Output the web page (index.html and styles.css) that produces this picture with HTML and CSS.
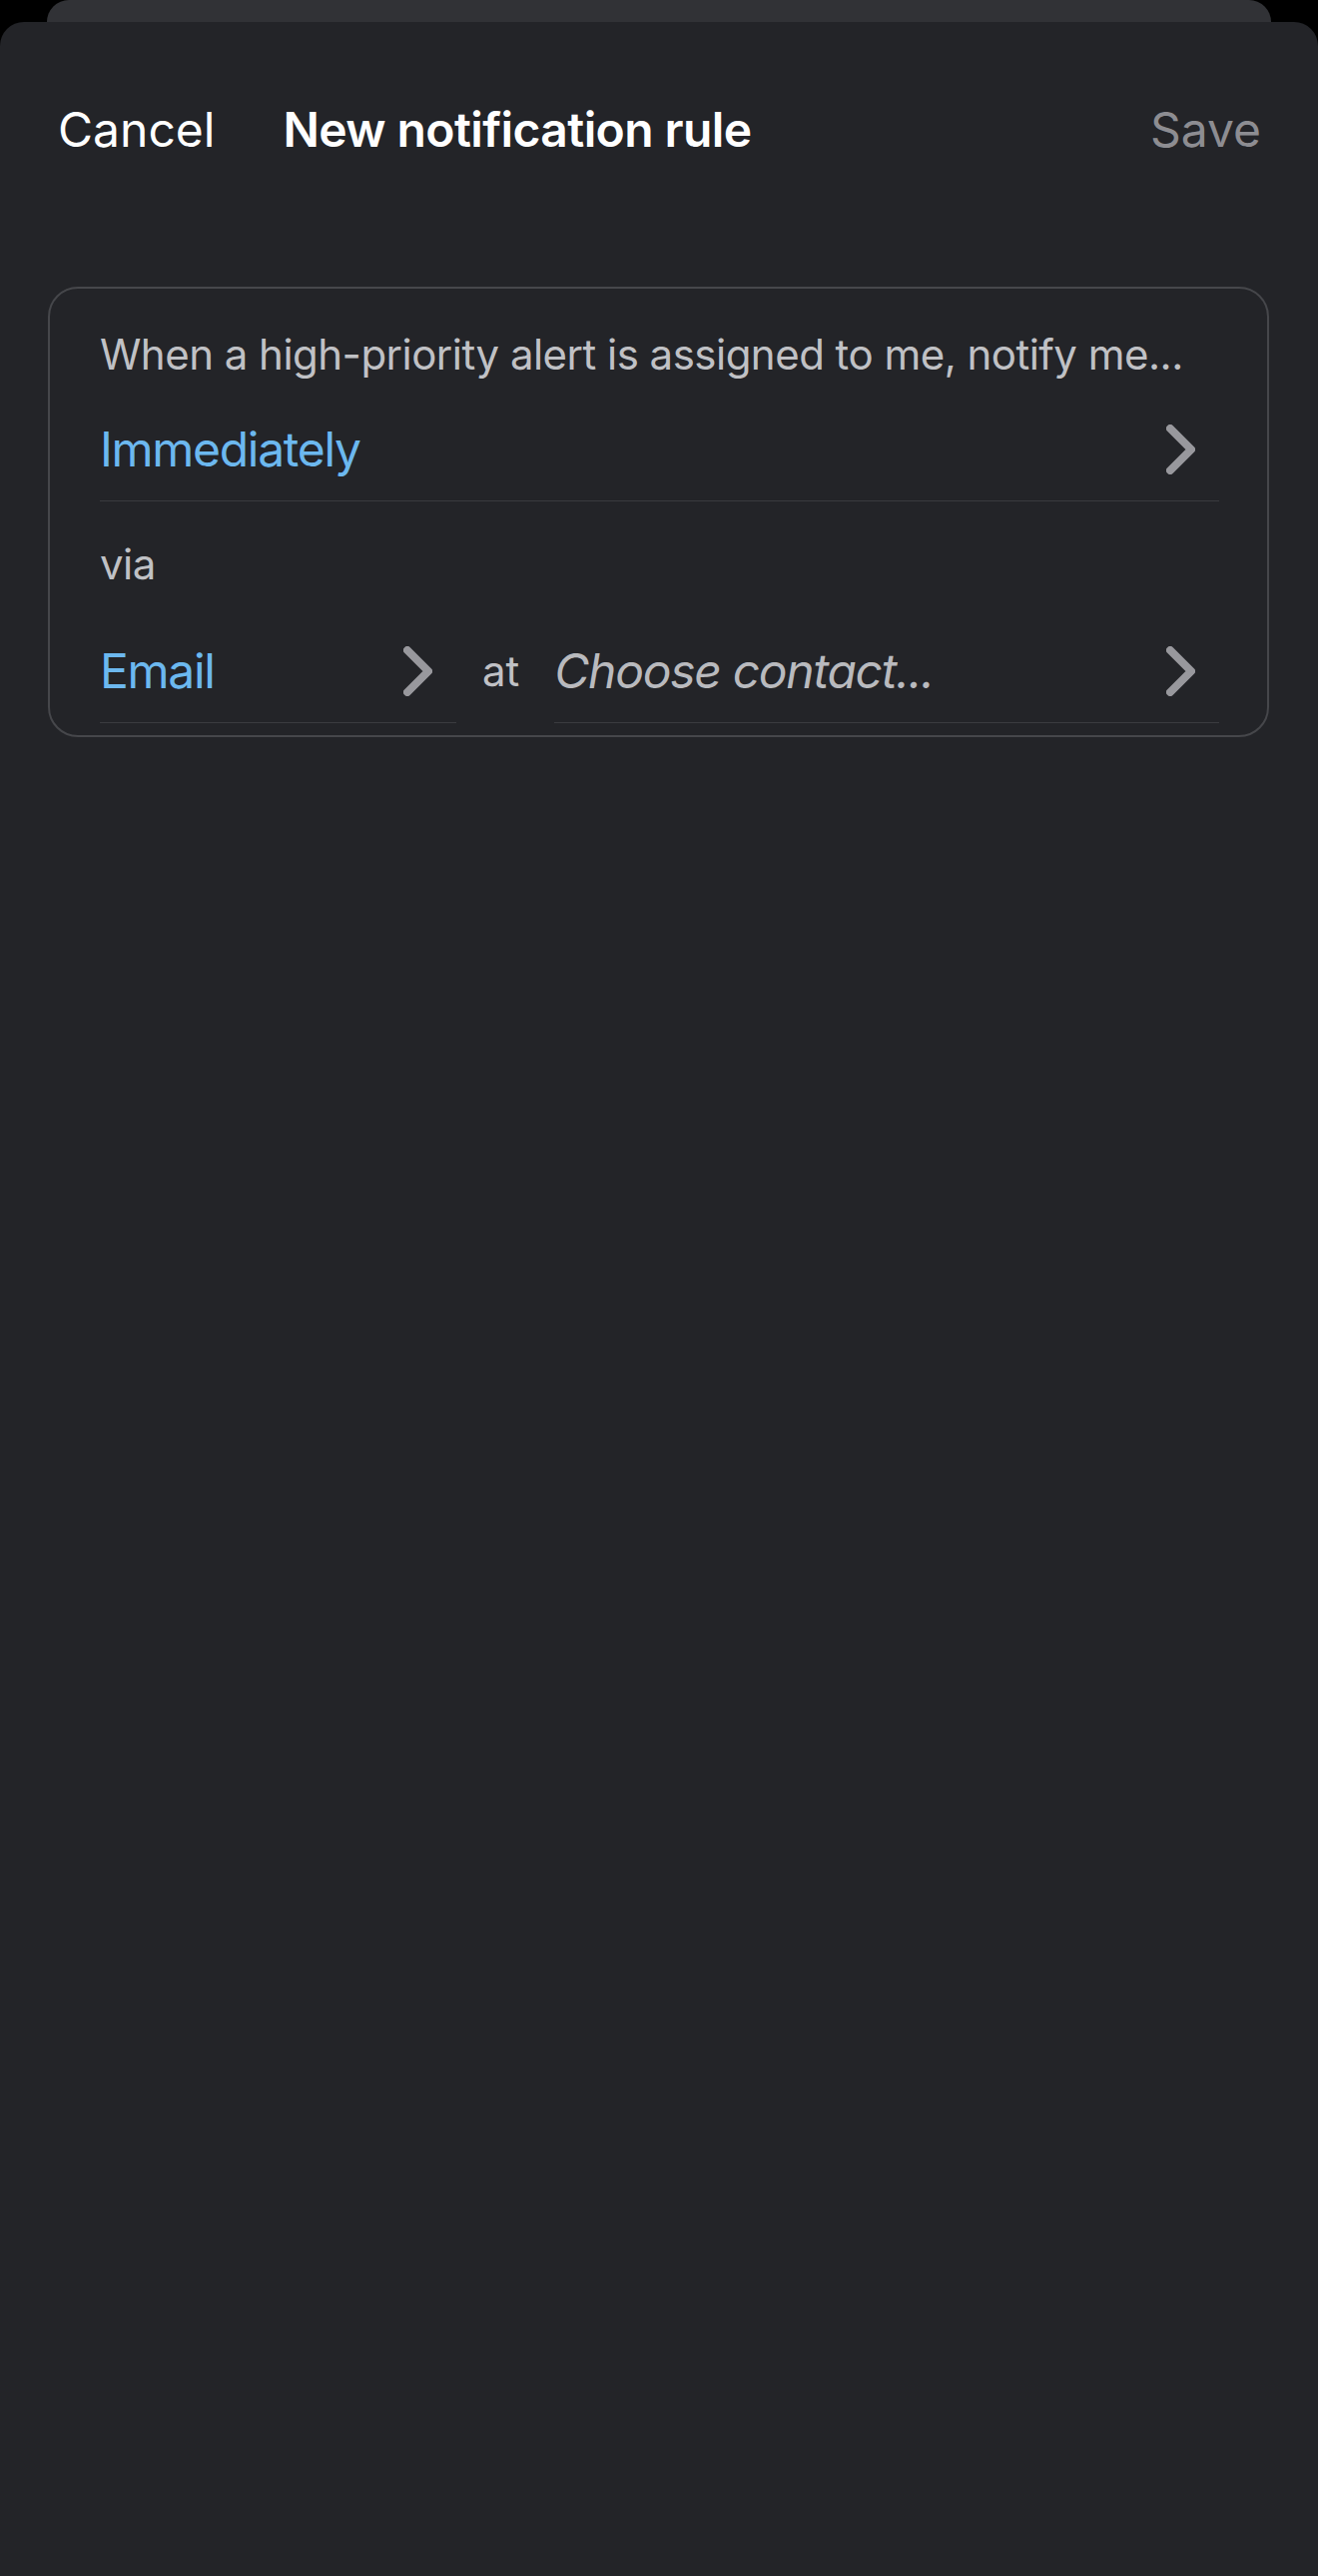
FILE: index.html
```html
<!DOCTYPE html>
<html lang="en">
<head>
<meta charset="utf-8">
<title>New notification rule</title>
<link rel="stylesheet" href="styles.css">
</head>
<body>
<div class="peek"></div>
<main class="sheet">
  <header class="nav">
    <span class="nav-cancel">Cancel</span>
    <span class="nav-title">New notification rule</span>
    <span class="nav-save">Save</span>
  </header>

  <section class="rule-card">
    <p class="rule-lead">When a high-priority alert is assigned to me, notify me...</p>
    <div class="rule-row rule-row-full">
      <span class="rule-value">Immediately</span>
      <svg class="chev" width="29" height="50" viewBox="0 0 29 50"><path d="M4 4 L25 25 L4 46"/></svg>
    </div>
    <p class="rule-lead rule-via">via</p>
    <div class="rule-split">
      <div class="rule-row rule-row-method">
        <span class="rule-value">Email</span>
        <svg class="chev" width="29" height="50" viewBox="0 0 29 50"><path d="M4 4 L25 25 L4 46"/></svg>
      </div>
      <span class="rule-at">at</span>
      <div class="rule-row rule-row-contact">
        <span class="rule-placeholder">Choose contact...</span>
        <svg class="chev" width="29" height="50" viewBox="0 0 29 50"><path d="M4 4 L25 25 L4 46"/></svg>
      </div>
    </div>
  </section>
</main>
</body>
</html>
```

FILE: styles.css
```css
html, body {
  margin: 0;
  padding: 0;
}

body {
  background: #000000;
  font-family: Inter, "Noto Sans", "Liberation Sans", sans-serif;
  height: 2579px;
  overflow: hidden;
}

.peek {
  height: 22px;
  margin: 0 47px 0 47px;
  background: #313236;
  border-radius: 22px 22px 0 0;
}

.sheet {
  background: #232428;
  border-radius: 24px 24px 0 0;
  min-height: 2557px;
  box-sizing: border-box;
  padding-top: 77px;
}

.nav {
  display: flex;
  align-items: baseline;
  padding: 0 57px 0 58px;
  font-size: 48px;
  line-height: 62px;
}

.nav-cancel {
  color: #ffffff;
}

.nav-title {
  color: #ffffff;
  font-weight: 600;
  margin-left: 68px;
  letter-spacing: -0.6px;
}

.nav-save {
  margin-left: auto;
  color: #8d8d92;
}

.rule-card {
  margin: 126px 49px 0 48px;
  border: 2px solid #46474b;
  border-radius: 30px;
  padding: 41px 48px 12px 50px;
}

.rule-lead {
  margin: 0;
  font-size: 42px;
  line-height: 50px;
  color: #c0c1c5;
  letter-spacing: -0.52px;
  white-space: nowrap;
}

.rule-row {
  display: flex;
  align-items: center;
  padding-bottom: 20px;
  border-bottom: 1px solid #3a3b3f;
  font-size: 48px;
  line-height: 62px;
}

.rule-row-full {
  margin-top: 39px;
}

.rule-via {
  margin-top: 38px;
}

.rule-split {
  display: flex;
  align-items: flex-start;
  margin-top: 51px;
}

.rule-row-method {
  width: 357px;
  flex: none;
}

.rule-row-contact {
  flex: 1;
}

.rule-value {
  color: #6cb8ef;
  letter-spacing: -1.3px;
}

.rule-placeholder {
  color: #b9babe;
  font-style: italic;
  letter-spacing: -1.3px;
}

.rule-at {
  font-size: 42px;
  line-height: 62px;
  color: #c0c1c5;
  margin: 0 35px 0 26px;
}

.chev {
  margin-left: auto;
  margin-right: 24px;
  flex: none;
  display: block;
}

.chev path {
  fill: none;
  stroke: #98989d;
  stroke-width: 8;
  stroke-linecap: round;
  stroke-linejoin: round;
}
```
